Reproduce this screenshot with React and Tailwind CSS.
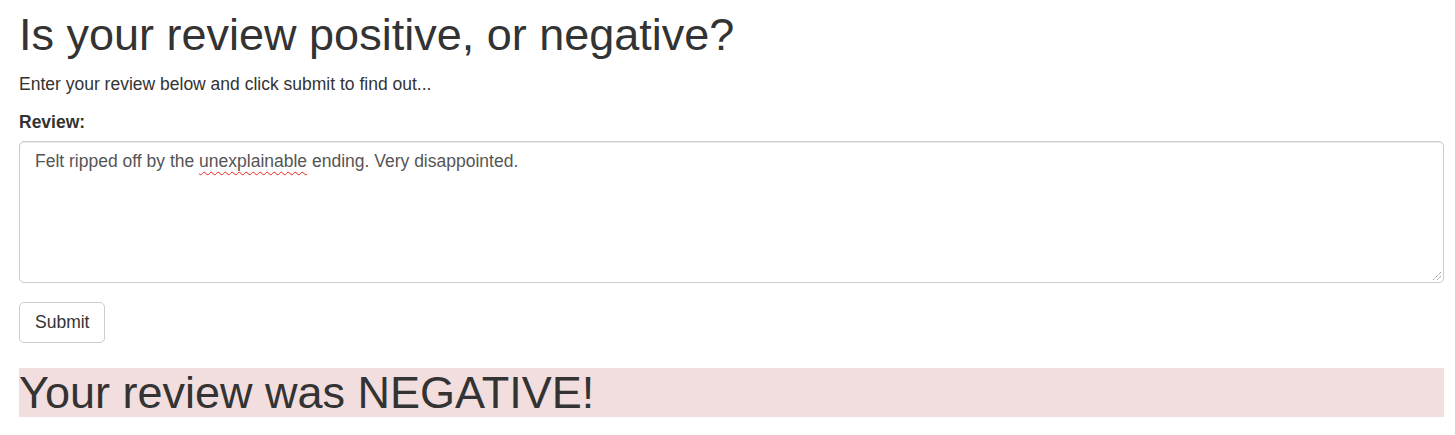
export default function App() {
  return (
    <div className="min-h-[435px] bg-white pl-[19px] pr-[11px] pt-[10px] text-[#333] font-['Liberation_Sans',Arial,sans-serif]">
      <h1 className="text-[45px] leading-[49.5px] font-normal">Is your review positive, or negative?</h1>
      <p className="mt-[12.5px] text-[17.5px] leading-[25px]">Enter your review below and click submit to find out...</p>
      <div className="mt-[12.5px] text-[17.5px] leading-[25px] font-bold">Review:</div>
      <div className="relative mt-[6px] h-[142px] rounded-[5px] border border-[#ccc] bg-white px-[15px] py-[7.5px] text-[17.5px] leading-[25px] text-[#555] shadow-[inset_0_1px_1px_rgba(0,0,0,0.075)]">
        Felt ripped off by the{" "}
        <span className="underline decoration-wavy decoration-[#e22] decoration-1 underline-offset-[4px]">unexplainable</span>{" "}
        ending. Very disappointed.
        <svg className="absolute right-[1px] bottom-[1px]" width="12" height="12" viewBox="0 0 12 12">
          <path d="M11 3 L3 11 M11 7 L7 11" stroke="#777" strokeWidth="1" strokeDasharray="1 1" fill="none" />
        </svg>
      </div>
      <button className="mt-[19px] block h-[41px] rounded-[5px] border border-[#ccc] bg-white px-[15px] text-[17.5px] leading-[25px] text-[#333]">Submit</button>
      <div className="mt-[25px] bg-[#f2dede] h-[49px] text-[45px] leading-[49.5px]">Your review was NEGATIVE!</div>
    </div>
  );
}
